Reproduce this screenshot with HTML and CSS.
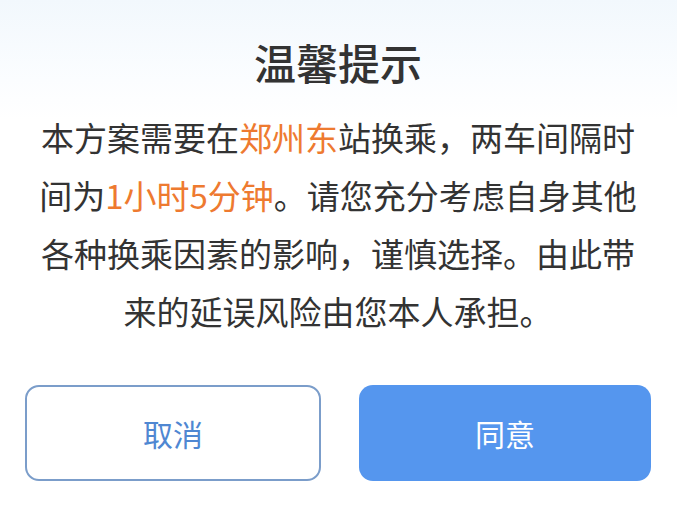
FILE: index.html
```html
<!DOCTYPE html>
<html lang="zh-CN">
<head>
    <meta charset="UTF-8">
    <meta name="viewport" content="width=device-width, initial-scale=1.0">
    <title>温馨提示</title>
    <link rel="stylesheet" href="styles.css">
</head>
<body>

    <div class="dialog">
        <h2 class="dialog-title">温馨提示</h2>

        <p class="dialog-text">
            本方案需要在<span class="hl">郑州东</span>站换乘，两车间隔时间为<span class="hl">1小时5分钟</span>。请您充分考虑自身其他各种换乘因素的影响，谨慎选择。由此带来的延误风险由您本人承担。
        </p>

        <div class="dialog-actions">
            <button class="btn btn-cancel">取消</button>
            <button class="btn btn-ok">同意</button>
        </div>
    </div>

</body>
</html>
```

FILE: styles.css
```css
body {
    margin: 0;
    padding: 0;
    font-family: "Noto Sans CJK SC", "Noto Sans", sans-serif;
    background-color: #fff;
}

.dialog {
    width: 677px;
    height: 527px;
    box-sizing: border-box;
    padding: 34px 26px 0 25px;
    background: linear-gradient(to bottom, #f2f8fd 0px, #fbfdff 80px, #ffffff 120px);
}

.dialog-title {
    margin: 0;
    font-size: 42px;
    line-height: 56px;
    font-weight: 500;
    color: #333;
    text-align: center;
}

.dialog-text {
    width: 600px;
    margin: 18px auto 0;
    font-size: 33px;
    line-height: 58px;
    color: #333;
    text-align: center;
}

.hl {
    color: #ee7a30;
}

.dialog-actions {
    display: flex;
    gap: 38px;
    margin-top: 45px;
}

.btn {
    flex: 1;
    height: 96px;
    border-radius: 14px;
    font-family: inherit;
    font-size: 30px;
    cursor: pointer;
}

.btn-cancel {
    background-color: #fff;
    border: 2px solid #7b9dca;
    color: #4f87d2;
}

.btn-ok {
    background-color: #5596ee;
    border: none;
    color: #fff;
}
```
